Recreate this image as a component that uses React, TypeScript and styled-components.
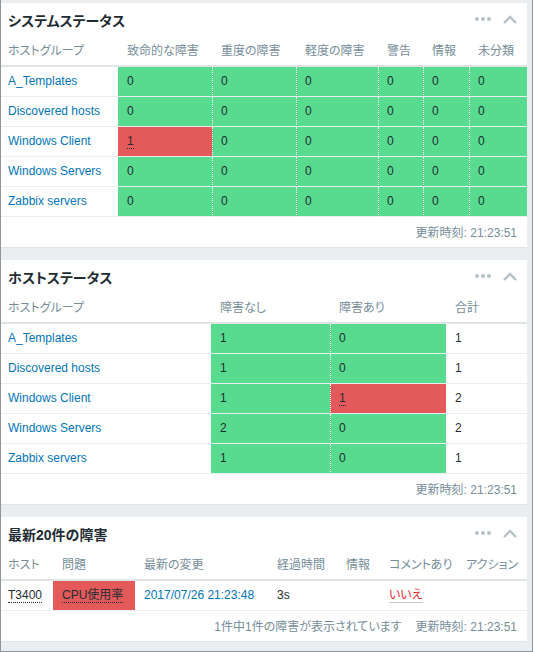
import React from 'react'
import styled, { createGlobalStyle } from 'styled-components'

const GlobalStyle = createGlobalStyle`
  html, body {
    margin: 0;
    padding: 0;
  }
  body {
    background: #ebeef0;
    font-family: 'Liberation Sans', Arial, 'Noto Sans CJK JP', sans-serif;
    font-size: 12px;
    font-feature-settings: 'palt';
    color: #1f2c33;
  }
`

const Frame = styled.div`
  box-sizing: border-box;
  width: 533px;
  height: 652px;
  padding: 3px 5px 0 0;
  border: 1px solid #8f9498;
  border-top: none;
  display: flex;
  flex-direction: column;
  gap: 12px;
  overflow: hidden;
`

const Widget = styled.section`
  background: #fff;
  border-bottom: 1px solid #dfe4e7;
`

const WidgetHead = styled.div`
  height: 32px;
  display: flex;
  align-items: center;
  justify-content: space-between;
  padding: 0 10px 0 7px;
`

const Title = styled.h4`
  margin: 0;
  padding-top: 1px;
  font-size: 14px;
  font-weight: bold;
  color: #1f2c33;
`

const HeadTools = styled.div`
  display: flex;
  align-items: center;
  gap: 12px;
  color: #b5c1c7;
`

const Grid = styled.div<{ $cols: string }>`
  display: grid;
  grid-template-columns: ${p => p.$cols};
`

const HeadCell = styled.div<{ $first?: boolean }>`
  box-sizing: border-box;
  height: 32px;
  padding-top: 2px;
  line-height: 28px;
  padding-left: ${p => (p.$first ? 7 : 9)}px;
  color: #768d99;
  border-bottom: 2px solid #dfe4e7;
  white-space: nowrap;
`

type Tone = 'ok' | 'problem'

const toneColor = (t?: Tone) =>
  t === 'ok' ? '#59db8f' : t === 'problem' ? '#e45959' : 'transparent'

const Cell = styled.div<{ $tone?: Tone; $first?: boolean; $split?: boolean }>`
  box-sizing: border-box;
  height: 30px;
  line-height: 29px;
  padding-left: ${p => (p.$first ? 7 : p.$split ? 8 : 9)}px;
  background: ${p => toneColor(p.$tone)};
  border-bottom: 1px solid #ebeef0;
  border-left: ${p => (p.$split ? '1px dotted #fff' : 'none')};
  white-space: nowrap;
`

const Link = styled.a`
  color: #0275b8;
  text-decoration: none;
  cursor: pointer;
`

const Hint = styled.span`
  border-bottom: 1px dotted #1f2c33;
  cursor: pointer;
`

const NoLink = styled.a`
  color: #e0262b;
  text-decoration: none;
  border-bottom: 1px solid #c3cbcf;
`

const Footer = styled.div`
  box-sizing: border-box;
  height: 30px;
  display: flex;
  justify-content: flex-end;
  gap: 14px;
  padding: 9px 10px 0;
  line-height: 14px;
  color: #768d99;
`

const Dots = () => (
  <svg width="16" height="4" viewBox="0 0 16 4">
    <circle cx="2" cy="2" r="2" fill="currentColor" />
    <circle cx="8" cy="2" r="2" fill="currentColor" />
    <circle cx="14" cy="2" r="2" fill="currentColor" />
  </svg>
)

const ChevronUp = () => (
  <svg width="14" height="9" viewBox="0 0 14 9">
    <path d="M1 8 L7 2 L13 8" fill="none" stroke="currentColor" strokeWidth="2.4" />
  </svg>
)

const Head = ({ title }: { title: string }) => (
  <WidgetHead>
    <Title>{title}</Title>
    <HeadTools>
      <Dots />
      <ChevronUp />
    </HeadTools>
  </WidgetHead>
)

const Updated = () => <span>更新時刻: 21:23:51</span>

const groups = [
  'A_Templates',
  'Discovered hosts',
  'Windows Client',
  'Windows Servers',
  'Zabbix servers',
]

const severities = ['致命的な障害', '重度の障害', '軽度の障害', '警告', '情報', '未分類']

// problem counts per group, by severity
const systemStatus: number[][] = [
  [0, 0, 0, 0, 0, 0],
  [0, 0, 0, 0, 0, 0],
  [1, 0, 0, 0, 0, 0],
  [0, 0, 0, 0, 0, 0],
  [0, 0, 0, 0, 0, 0],
]

// [without problems, with problems, total]
const hostStatus: number[][] = [
  [1, 0, 1],
  [1, 0, 1],
  [1, 1, 2],
  [2, 0, 2],
  [1, 0, 1],
]

const SystemStatus = () => (
  <Widget>
    <Head title="システムステータス" />
    <Grid $cols="117px 94px 84px 82px 45px 46px 58px">
      <HeadCell $first>ホストグループ</HeadCell>
      {severities.map(s => (
        <HeadCell key={s}>{s}</HeadCell>
      ))}
      {groups.map((g, r) => (
        <React.Fragment key={g}>
          <Cell $first>
            <Link>{g}</Link>
          </Cell>
          {systemStatus[r].map((n, c) => (
            <Cell key={c} $tone={n > 0 ? 'problem' : 'ok'} $split={c > 0}>
              {n > 0 ? <Hint>{n}</Hint> : n}
            </Cell>
          ))}
        </React.Fragment>
      ))}
    </Grid>
    <Footer>
      <Updated />
    </Footer>
  </Widget>
)

const HostStatus = () => (
  <Widget>
    <Head title="ホストステータス" />
    <Grid $cols="210px 119px 116px 81px">
      <HeadCell $first>ホストグループ</HeadCell>
      <HeadCell>障害なし</HeadCell>
      <HeadCell>障害あり</HeadCell>
      <HeadCell>合計</HeadCell>
      {groups.map((g, r) => {
        const [ok, bad, total] = hostStatus[r]
        return (
          <React.Fragment key={g}>
            <Cell $first>
              <Link>{g}</Link>
            </Cell>
            <Cell $tone="ok">{ok}</Cell>
            <Cell $tone={bad > 0 ? 'problem' : 'ok'} $split>
              {bad > 0 ? <Hint>{bad}</Hint> : bad}
            </Cell>
            <Cell>{total}</Cell>
          </React.Fragment>
        )
      })}
    </Grid>
    <Footer>
      <Updated />
    </Footer>
  </Widget>
)

const LatestProblems = () => (
  <Widget>
    <Head title="最新20件の障害" />
    <Grid $cols="52px 82px 133px 69px 43px 77px 70px">
      <HeadCell $first>ホスト</HeadCell>
      <HeadCell>問題</HeadCell>
      <HeadCell>最新の変更</HeadCell>
      <HeadCell>経過時間</HeadCell>
      <HeadCell>情報</HeadCell>
      <HeadCell>コメントあり</HeadCell>
      <HeadCell>アクション</HeadCell>
      <Cell $first>
        <Hint>T3400</Hint>
      </Cell>
      <Cell $tone="problem">
        <Hint>CPU使用率</Hint>
      </Cell>
      <Cell>
        <Link>2017/07/26 21:23:48</Link>
      </Cell>
      <Cell>3s</Cell>
      <Cell />
      <Cell>
        <NoLink>いいえ</NoLink>
      </Cell>
      <Cell />
    </Grid>
    <Footer>
      <span>1件中1件の障害が表示されています</span>
      <Updated />
    </Footer>
  </Widget>
)

export default function App() {
  return (
    <>
      <GlobalStyle />
      <Frame>
        <SystemStatus />
        <HostStatus />
        <LatestProblems />
      </Frame>
    </>
  )
}
